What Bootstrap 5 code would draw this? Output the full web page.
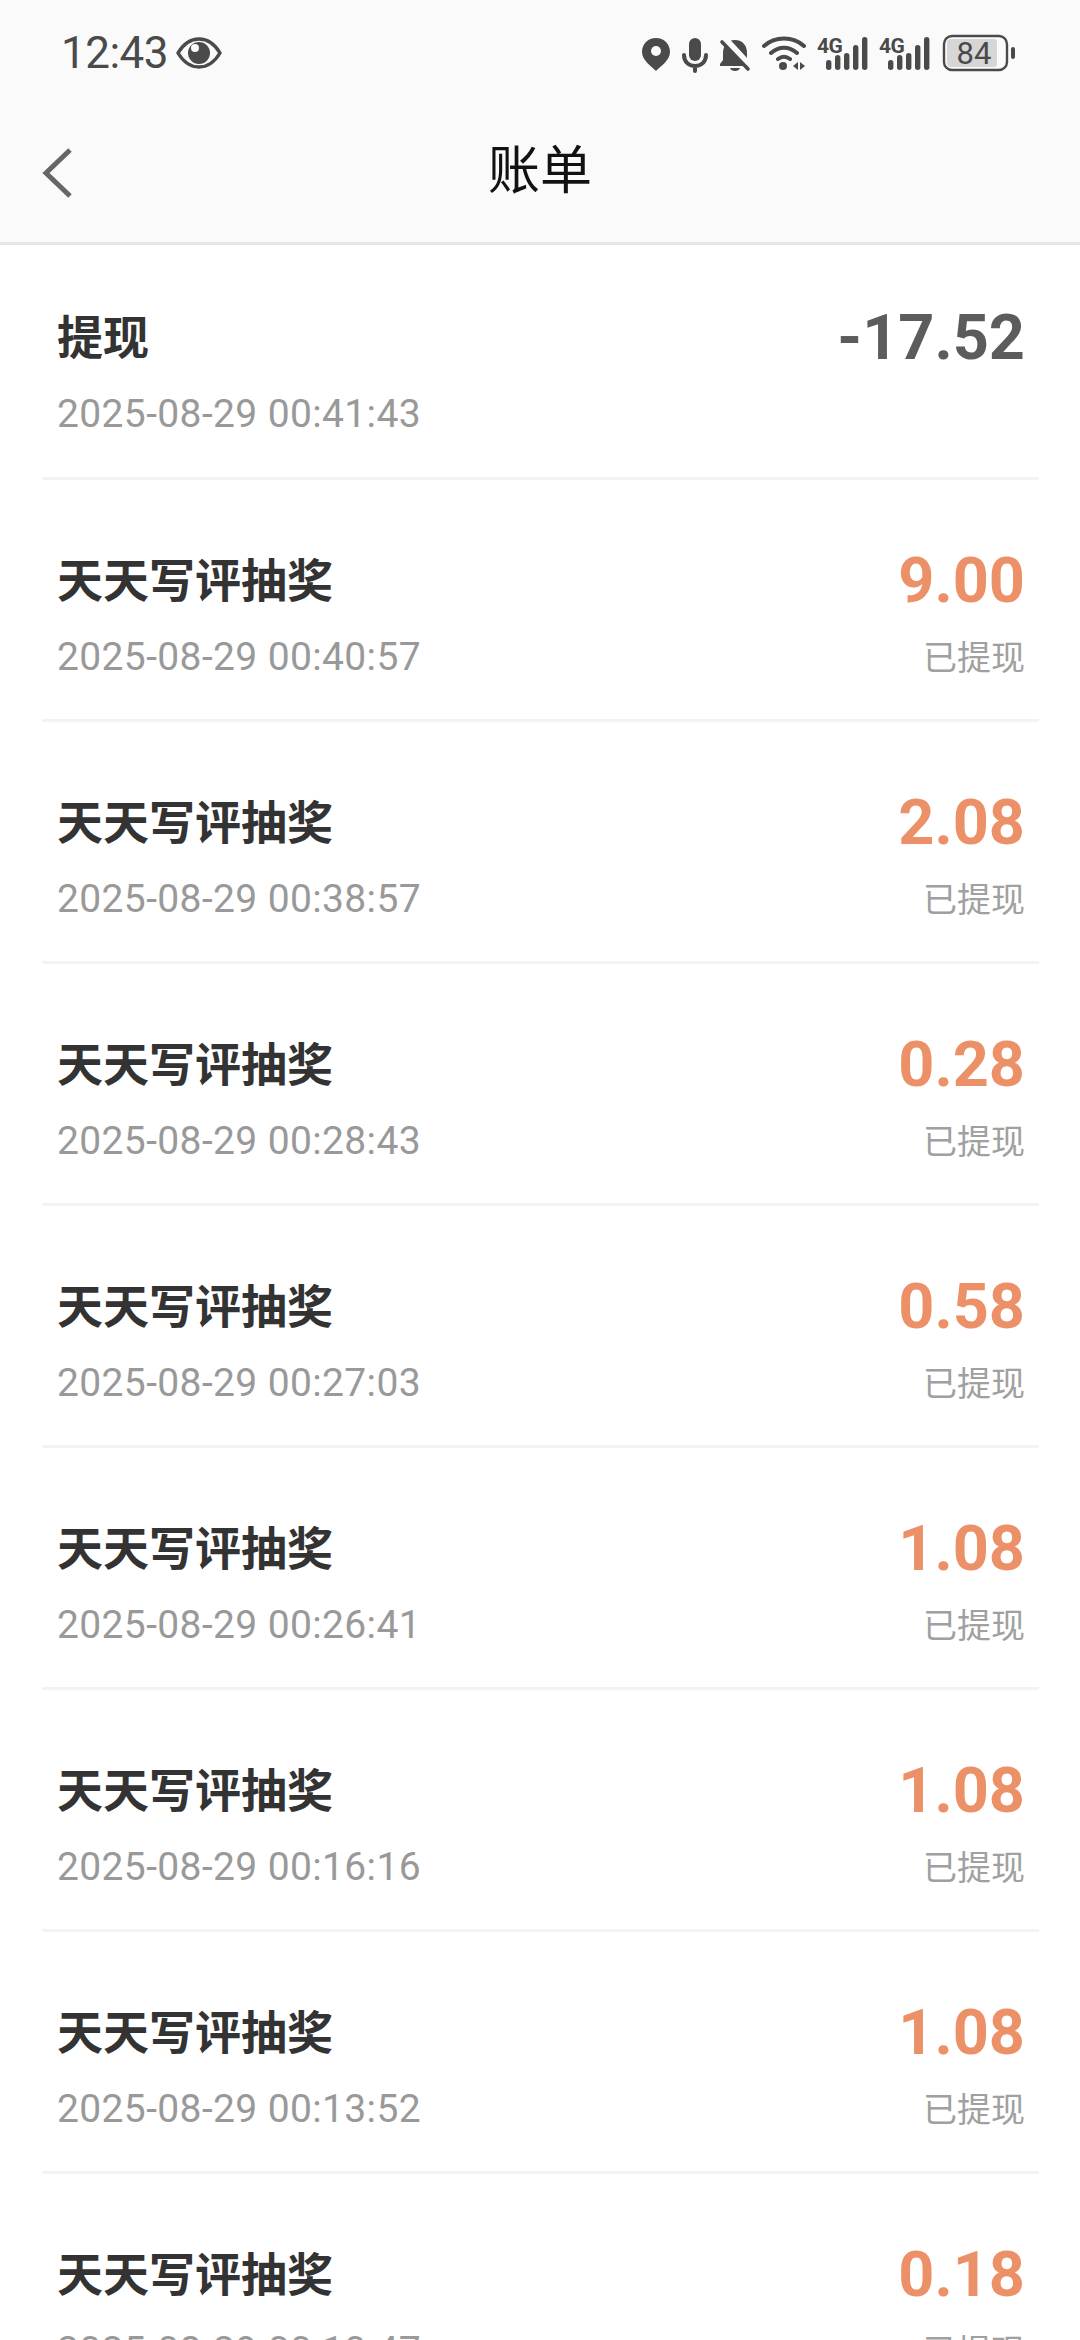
<!DOCTYPE html>
<html lang="zh-CN">
<head>
    <meta charset="UTF-8">
    <meta name="viewport" content="width=device-width, initial-scale=1.0">
    <title>账单</title>
    <link rel="stylesheet" href="https://cdn.jsdelivr.net/npm/bootstrap@5.3.1/dist/css/bootstrap.min.css">
    <script src="https://cdn.jsdelivr.net/npm/bootstrap@5.3.1/dist/js/bootstrap.bundle.min.js"></script>
    <style>
        html, body {
            height: 2340px;
            overflow: hidden;
        }
        body {
            background: #ffffff;
            font-family: Roboto, "Noto Sans CJK SC", sans-serif;
        }
        .top-area {
            background: #fafafa;
            height: 245px;
            border-bottom: 3px solid #e6e6e6;
        }
        .status-bar {
            height: 106px;
            padding: 0 62px 0 61px;
            color: #4a4a4a;
        }
        .status-left {
            gap: 8px;
        }
        .clock {
            font-size: 44px;
            line-height: 1;
            letter-spacing: -0.5px;
        }
        .nav-bar {
            height: 136px;
        }
        .back-btn {
            left: 41px;
            top: 41px;
            width: 32px;
            height: 52px;
        }
        .page-title {
            font-family: "Noto Sans CJK SC", sans-serif;
            font-size: 52px;
            line-height: 1;
            color: #111111;
            margin-top: -15px;
        }
        .bill-list {
            padding: 0 41px 0 42px;
        }
        .bill-row {
            height: 242px;
            padding: 67px 14px 0 15px;
            border-bottom: 3px solid #f3f3f3;
        }
        .bill-row:first-child {
            height: 235px;
            padding-top: 59px;
        }
        .bill-name {
            font-family: "Noto Sans CJK SC", sans-serif;
            font-weight: 700;
            font-size: 46px;
            line-height: 60px;
            color: #333333;
        }
        .bill-time {
            font-size: 39px;
            letter-spacing: 0.37px;
            line-height: 50px;
            color: #999999;
            margin-top: 25px;
        }
        .bill-amount {
            font-weight: 700;
            font-size: 63px;
            line-height: 60px;
            color: #ec9068;
            margin-top: 4px;
        }
        .bill-amount.is-out {
            color: #5c5c5c;
        }
        .bill-state {
            font-family: "Noto Sans CJK SC", sans-serif;
            font-size: 34px;
            line-height: 50px;
            color: #a0a0a0;
            margin-top: 20px;
        }
    </style>
</head>
<body>

<div class="top-area">
    <div class="status-bar d-flex align-items-center justify-content-between">
        <div class="status-left d-flex align-items-center">
            <span class="clock">12:43</span>
            <svg width="46" height="32" viewBox="0 0 46 32">
                <path d="M2 16C8 6 15 2 23 2s15 4 21 14c-6 10-13 14-21 14S8 26 2 16z" fill="none" stroke="#4a4a4a" stroke-width="3.4"/>
                <circle cx="23" cy="16" r="11" fill="#4a4a4a"/>
                <circle cx="19" cy="11" r="4" fill="#fafafa"/>
            </svg>
        </div>
        <svg width="378" height="42" viewBox="640 30 378 42">
            <!-- pin -->
            <path d="M656 36c-8 0-14 6-14 14 0 8 9 14 14 19 5-5 14-11 14-19 0-8-6-14-14-14z" fill="#4a4a4a"/>
            <circle cx="656" cy="49" r="5" fill="#fafafa"/>
            <!-- mic -->
            <rect x="689" y="36" width="12" height="23" rx="6" fill="#4a4a4a"/>
            <path d="M684 53c0 7 5 11 11 11s11-4 11-11M695 64v5" fill="none" stroke="#4a4a4a" stroke-width="4" stroke-linecap="round"/>
            <!-- muted bell -->
            <path d="M735 38c-8 0-12 6-12 13v7l-3 4v2h30v-2l-3-4v-7c0-7-4-13-12-13z" fill="#4a4a4a"/>
            <path d="M730 66h10c-1 4-9 4-10 0z" fill="#4a4a4a"/>
            <path d="M724 37l26 28" stroke="#fafafa" stroke-width="8"/>
            <path d="M722 40l26 27" stroke="#4a4a4a" stroke-width="3.6" stroke-linecap="round"/>
            <!-- wifi -->
            <path d="M764 44c11-10 29-10 40 0M771 51c8-7 18-7 26 0M778 57c4-3 8-3 12 0" fill="none" stroke="#4a4a4a" stroke-width="4" stroke-linecap="round"/>
            <circle cx="783" cy="64" r="4" fill="#4a4a4a"/>
            <path d="M798 60v8l-5-4zM800 60l5 4-5 4z" fill="#4a4a4a"/>
            <!-- signal 1 -->
            <text x="817" y="51" font-family="Roboto" font-weight="700" font-size="21" letter-spacing="-0.5" fill="#4a4a4a">4G</text>
            <rect x="826" y="58" width="5.4" height="10" rx="2.7" fill="#4a4a4a"/>
            <rect x="835" y="53" width="5.4" height="15" rx="2.7" fill="#4a4a4a"/>
            <rect x="844" y="51" width="5.4" height="17" rx="2.7" fill="#4a4a4a"/>
            <rect x="853" y="43" width="5.4" height="25" rx="2.7" fill="#4a4a4a"/>
            <rect x="862" y="35" width="5.4" height="33" rx="2.7" fill="#4a4a4a"/>
            <!-- signal 2 -->
            <text x="879" y="51" font-family="Roboto" font-weight="700" font-size="21" letter-spacing="-0.5" fill="#4a4a4a">4G</text>
            <rect x="888" y="58" width="5.4" height="10" rx="2.7" fill="#4a4a4a"/>
            <rect x="897" y="53" width="5.4" height="15" rx="2.7" fill="#4a4a4a"/>
            <rect x="906" y="51" width="5.4" height="17" rx="2.7" fill="#4a4a4a"/>
            <rect x="915" y="43" width="5.4" height="25" rx="2.7" fill="#4a4a4a"/>
            <rect x="924" y="35" width="5.4" height="33" rx="2.7" fill="#4a4a4a"/>
            <!-- battery -->
            <rect x="944" y="34" width="63" height="34" rx="8" fill="#fafafa" stroke="#4a4a4a" stroke-width="2.4"/>
            <path d="M951 37h43a3 3 0 0 1 3 3v22a3 3 0 0 1-3 3h-43a4 4 0 0 1-4-4v-20a4 4 0 0 1 4-4z" fill="#d6d6d6"/>
            <rect x="1011" y="45" width="4" height="12" rx="2" fill="#4a4a4a"/>
            <text x="974" y="62" text-anchor="middle" font-family="Roboto" font-size="31" fill="#4a4a4a">84</text>
        </svg>
    </div>
    <div class="nav-bar position-relative d-flex align-items-center justify-content-center">
        <svg class="back-btn position-absolute" viewBox="0 0 32 52">
            <path d="M29 3L5 26l24 23" fill="none" stroke="#666666" stroke-width="5"/>
        </svg>
        <div class="page-title">账单</div>
    </div>
</div>

<div class="bill-list" id="billList"></div>

<script>
    const bills = [
        { name: '提现', time: '2025-08-29 00:41:43', amount: '-17.52', out: true },
        { name: '天天写评抽奖', time: '2025-08-29 00:40:57', amount: '9.00' },
        { name: '天天写评抽奖', time: '2025-08-29 00:38:57', amount: '2.08' },
        { name: '天天写评抽奖', time: '2025-08-29 00:28:43', amount: '0.28' },
        { name: '天天写评抽奖', time: '2025-08-29 00:27:03', amount: '0.58' },
        { name: '天天写评抽奖', time: '2025-08-29 00:26:41', amount: '1.08' },
        { name: '天天写评抽奖', time: '2025-08-29 00:16:16', amount: '1.08' },
        { name: '天天写评抽奖', time: '2025-08-29 00:13:52', amount: '1.08' },
        { name: '天天写评抽奖', time: '2025-08-29 00:10:47', amount: '0.18' }
    ];
    document.getElementById('billList').innerHTML = bills.map(b => `
        <div class="bill-row d-flex justify-content-between align-items-start">
            <div>
                <div class="bill-name">${b.name}</div>
                <div class="bill-time">${b.time}</div>
            </div>
            <div class="text-end">
                <div class="bill-amount ${b.out ? 'is-out' : ''}">${b.amount}</div>
                <div class="bill-state">${b.out ? '&nbsp;' : '已提现'}</div>
            </div>
        </div>`).join('');
</script>

</body>
</html>
